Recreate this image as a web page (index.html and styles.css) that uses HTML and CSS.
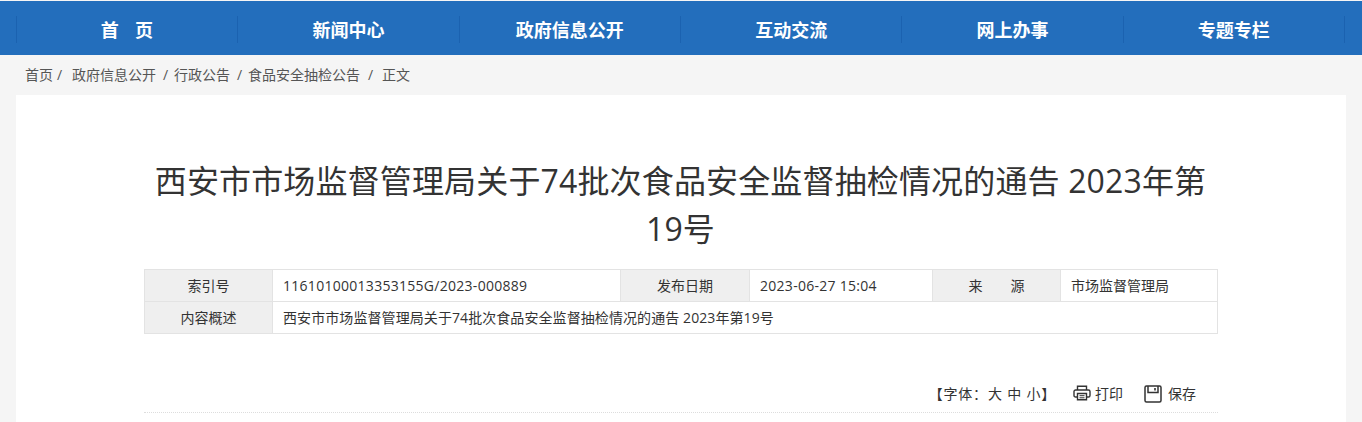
FILE: index.html
```html
<!DOCTYPE html>
<html lang="zh-CN">
<head>
<meta charset="utf-8">
<title>西安市市场监督管理局关于74批次食品安全监督抽检情况的通告</title>
<link rel="stylesheet" href="styles.css">
</head>
<body>
<nav class="nav">
  <ul class="nav-list">
    <li class="nav-item nav-home"><a href="#">首&nbsp;&nbsp;&nbsp;页</a></li>
    <li class="nav-item"><a href="#">新闻中心</a></li>
    <li class="nav-item"><a href="#">政府信息公开</a></li>
    <li class="nav-item"><a href="#">互动交流</a></li>
    <li class="nav-item"><a href="#">网上办事</a></li>
    <li class="nav-item"><a href="#">专题专栏</a></li>
  </ul>
</nav>
<div class="crumbs">
  <a href="#">首页</a><span class="sep sep-first">/</span><a href="#">政府信息公开</a><span class="sep">/</span><a href="#">行政公告</a><span class="sep">/</span><a href="#">食品安全抽检公告</a><span class="sep sep-last">/</span><a href="#">正文</a>
</div>
<main class="card">
  <h1 class="title">西安市市场监督管理局关于74批次食品安全监督抽检情况的通告 2023年第19号</h1>
  <table class="meta">
    <colgroup>
      <col class="c1"><col class="c2"><col class="c3"><col class="c4"><col class="c5"><col class="c6">
    </colgroup>
    <tr>
      <th>索引号</th><td class="num">11610100013353155G/2023-000889</td>
      <th>发布日期</th><td class="num">2023-06-27 15:04</td>
      <th>来&emsp;&emsp;源</th><td>市场监督管理局</td>
    </tr>
    <tr>
      <th>内容概述</th><td colspan="5" class="summary">西安市市场监督管理局关于74批次食品安全监督抽检情况的通告 2023年第19号</td>
    </tr>
  </table>
  <div class="tools">
    <span class="font-size">【字体：大 中 小】</span>
    <a class="tool tool-print" href="#">
      <svg class="icon" width="18" height="16" viewBox="0 0 18 16" fill="none" stroke="#333" stroke-width="1.4"><path d="M4.5 5V1.2h9V5"/><path d="M4.5 12H2.6A1.6 1.6 0 0 1 1 10.4V6.6A1.6 1.6 0 0 1 2.600 5h12.800A1.600 1.600 0 0 1 17 6.600v3.800a1.600 1.600 0 0 1-1.600 1.600h-1.900"/><path d="M4.500 8.500h9v6.300h-9z"/><path d="M6.500 10.700h5M6.500 12.800h5" stroke-width="1"/></svg>
      打印
    </a>
    <a class="tool tool-save" href="#">
      <svg class="icon" width="18" height="18" viewBox="0 0 18 18" fill="none" stroke="#333" stroke-width="1.500"><path d="M2.500 1h13A1.500 1.500 0 0 1 17 2.500v13a1.500 1.500 0 0 1-1.500 1.500h-13A1.500 1.500 0 0 1 1 15.500v-13A1.500 1.500 0 0 1 2.500 1z"/><path d="M4 1v6.500h10V1"/><path d="M11 3v2.500" stroke-width="1.600"/></svg>
      保存
    </a>
  </div>
</main>
</body>
</html>
```

FILE: styles.css
```css
* { box-sizing: border-box; }
html, body { margin: 0; padding: 0; }
body {
  height: 422px;
  overflow: hidden;
  background: #f5f5f5;
  color: #333;
  font-family: "Open Sans", "Noto Sans CJK SC", sans-serif;
  font-size: 14px;
}
a { color: inherit; text-decoration: none; }

.nav {
  margin-top: 1px;
  height: 54px;
  background: #236ebc;
  padding: 15px 16px 0;
}
.nav-list {
  display: grid;
  grid-template-columns: repeat(6, 1fr);
  width: 1329px;
  margin: 0;
  padding: 0;
  list-style: none;
  border-right: 1px solid #1b62b0;
}
.nav-item {
  height: 27px;
  line-height: 29px;
  text-align: center;
  border-left: 1px solid #1b62b0;
  color: #fff;
  font-size: 18px;
  font-weight: 700;
}
.nav-home { letter-spacing: .6px; }

.crumbs {
  display: flex;
  height: 40px;
  padding: 0 0 2px 25px;
  align-items: center;
  color: #555;
  font-size: 14px;
  white-space: pre;
}
.sep { margin: 0 7px; width: 4px; }
.sep-first { margin: 0 11px 0 4px; }
.sep-last { margin: 0 10px 0 8px; }

.card {
  width: 1330px;
  height: 327px;
  margin-left: 16px;
  padding: 62px 128px 0;
  background: #fff;
}
.title {
  margin: 0 0 0 -1px;
  color: #333;
  font-size: 32px;
  font-weight: 400;
  line-height: 48px;
  letter-spacing: .15px;
  text-align: center;
}
.meta {
  width: 1073px;
  margin-top: 16px;
  border-collapse: collapse;
  table-layout: fixed;
  font-size: 14px;
}
.c1 { width: 128px; }
.c2 { width: 348px; }
.c3 { width: 129px; }
.c4 { width: 183px; }
.c5 { width: 128px; }
.c6 { width: 157px; }
.meta th, .meta td {
  height: 32px;
  padding: 0 10px;
  border: 1px solid #e3e3e3;
  font-weight: 400;
  line-height: 30px;
  white-space: nowrap;
}
.meta th { background: #efefef; text-align: center; }
.meta td { color: #333; }
.meta .num { letter-spacing: .28px; }
.meta .summary { letter-spacing: .08px; }

.tools {
  display: flex;
  justify-content: flex-end;
  align-items: center;
  height: 46px;
  margin-top: 33px;
  padding: 6px 22px 0 0;
  border-bottom: 1px dotted #ddd;
  font-size: 14px;
}
.font-size {
  margin-right: 17px;
  font-family: "Open Sans", "Noto Sans CJK TC", sans-serif;
  letter-spacing: .8px;
}
.tool { display: flex; align-items: center; gap: 4px; }
.tool-print { margin-right: 21px; }
.tool-save { gap: 6px; }
.tool-save .icon { margin-top: 2px; }
```
